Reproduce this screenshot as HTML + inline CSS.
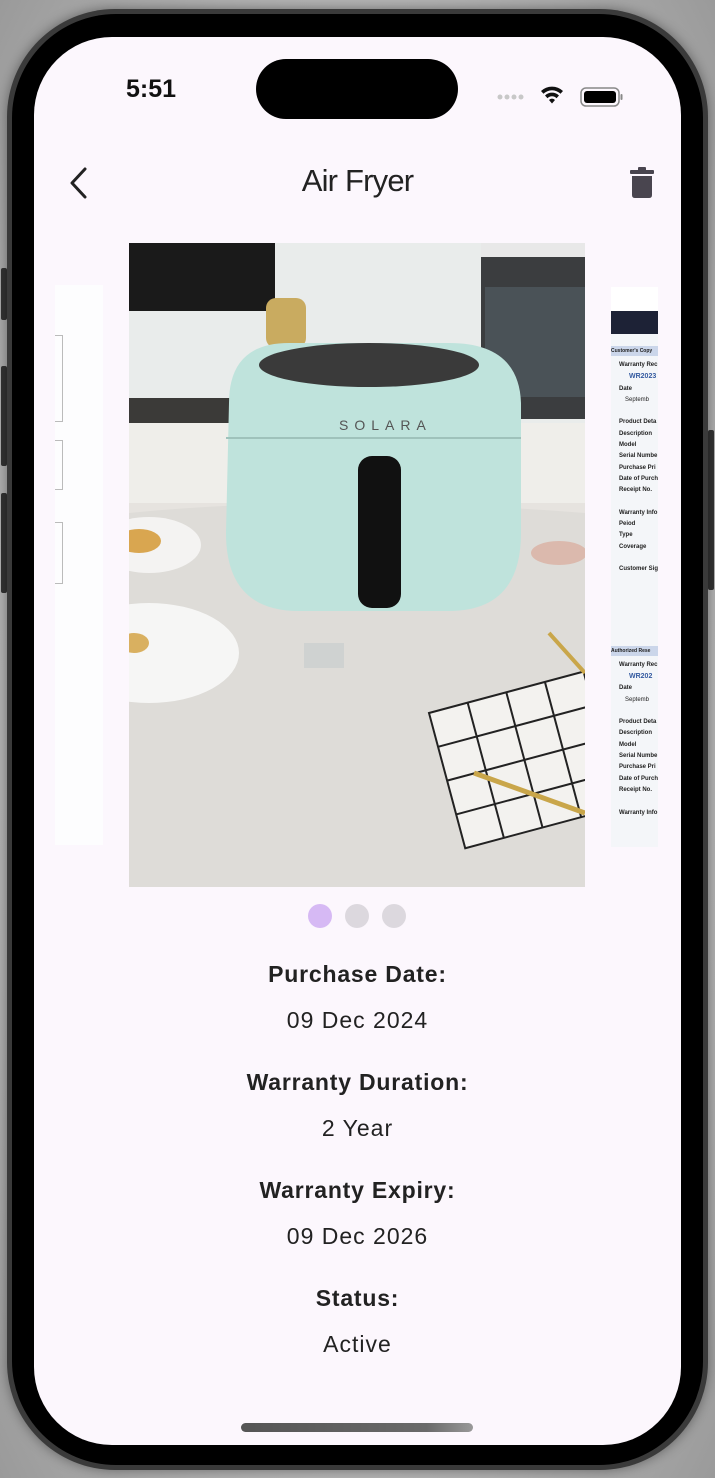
<!DOCTYPE html>
<html><head><meta charset="utf-8"><style>
*{margin:0;padding:0;box-sizing:border-box}
html,body{width:715px;height:1478px;overflow:hidden}
body{background:radial-gradient(ellipse at 50% 50%,#d8d8d8 0%,#bdbdbd 60%,#9a9a9a 100%);font-family:"Liberation Sans",sans-serif;position:relative}
.frame{position:absolute;left:7px;top:9px;width:701px;height:1461px;border-radius:108px;background:#3a3a3a;box-shadow:0 0 12px rgba(0,0,0,.4)}
.frame2{position:absolute;left:12px;top:14px;width:691px;height:1451px;border-radius:104px;background:#000}
.btn{position:absolute;background:#333;width:6px;border-radius:2px}
.screen{position:absolute;left:34px;top:37px;width:647px;height:1408px;border-radius:78px;background:#fcf7fd;overflow:hidden}
.island{position:absolute;left:222px;top:22px;width:202px;height:60px;border-radius:30px;background:#000}
.time{position:absolute;left:92px;top:38px;font-size:25px;font-weight:bold;color:#111}
.title{position:absolute;left:0;width:647px;top:126px;text-align:center;font-size:31px;color:#222;letter-spacing:-0.8px}
.lbl{position:absolute;left:0;width:647px;text-align:center;font-size:23px;font-weight:bold;color:#222;letter-spacing:0.8px}
.val{position:absolute;left:0;width:647px;text-align:center;font-size:23px;color:#222;letter-spacing:1px}
.dot{position:absolute;top:867px;width:24px;height:24px;border-radius:12px;background:#dcd8de}
.home{position:absolute;left:207px;top:1386px;width:232px;height:9px;border-radius:5px;background:linear-gradient(90deg,#555,#6a6a6a 80%,#999)}
.doc{position:absolute;left:577px;top:250px;width:47px;height:560px;background:#f4f6f9;overflow:hidden;font-size:6px;font-weight:bold;color:#222;line-height:11.3px}
</style></head><body>
<div class="btn" style="left:1px;top:268px;height:52px"></div>
<div class="btn" style="left:1px;top:366px;height:100px"></div>
<div class="btn" style="left:1px;top:493px;height:100px"></div>
<div class="btn" style="left:708px;top:430px;height:160px"></div>
<div class="frame"></div><div class="frame2"></div>
<div class="screen">
<div class="island"></div>
<div class="time">5:51</div>
<svg style="position:absolute;left:462px;top:48px" width="130" height="24" viewBox="0 0 130 24">
<g fill="#c8c8c8"><circle cx="4" cy="12" r="2.5"/><circle cx="11" cy="12" r="2.5"/><circle cx="18" cy="12" r="2.5"/><circle cx="25" cy="12" r="2.5"/></g>
<path d="M45 6 a16 16 0 0 1 22 0 l-2.5 2.8 a12 12 0 0 0 -17 0z M49 10.5 a10 10 0 0 1 14 0 l-2.5 2.8 a6 6 0 0 0 -9 0z M53 15 a4 4 0 0 1 6 0 l-3 3.5z" fill="#111"/>
<rect x="85" y="3" width="38" height="18" rx="5" fill="none" stroke="#888" stroke-width="1.5"/>
<rect x="88" y="6" width="32" height="12" rx="3" fill="#000"/>
<rect x="124.5" y="9" width="2" height="6" rx="1" fill="#888"/>
</svg>
<svg style="position:absolute;left:32px;top:129px" width="24" height="34"><path d="M19 3 L6 17 L19 31" fill="none" stroke="#222" stroke-width="3" stroke-linecap="round" stroke-linejoin="round"/></svg>
<div class="title">Air Fryer</div>
<svg style="position:absolute;left:596px;top:130px" width="24" height="32"><rect x="0" y="3" width="24" height="4" rx="1" fill="#49454f"/><rect x="8" y="0" width="8" height="4" rx="1" fill="#49454f"/><path d="M2 9 H22 V28 Q22 31 19 31 H5 Q2 31 2 28Z" fill="#49454f"/></svg>

<div style="position:absolute;left:21px;top:248px;width:48px;height:560px;background:#fdfdfe"><div style="position:absolute;left:0;top:50px;width:8px;height:87px;border:1px solid #bbb;border-left:none"></div><div style="position:absolute;left:0;top:155px;width:8px;height:50px;border:1px solid #bbb;border-left:none"></div><div style="position:absolute;left:0;top:237px;width:8px;height:62px;border:1px solid #bbb;border-left:none"></div></div>

<div class="doc">
<div style="height:24px;background:#fff"></div>
<div style="height:23px;background:#1d2236"></div>
<div style="height:12px"></div>
<div style="background:#cbd6ea;height:10px;font-size:5px;line-height:10px">Customer's Copy</div>
<div style="padding:4px 0 0 8px">Warranty Rec<br><span style="color:#345aa0;font-size:7px;padding-left:10px">WR2023</span><br>Date<br><span style="font-weight:normal;padding-left:6px">Septemb</span><br><br>Product Deta<br>Description<br>Model<br>Serial Numbe<br>Purchase Pri<br>Date of Purch<br>Receipt No.<br><br>Warranty Info<br>Peiod<br>Type<br>Coverage<br><br>Customer Sig</div>
<div style="height:70px"></div>
<div style="background:#cbd6ea;height:10px;font-size:5px;line-height:10px">Authorized Rese</div>
<div style="padding:4px 0 0 8px">Warranty Rec<br><span style="color:#345aa0;font-size:7px;padding-left:10px">WR202</span><br>Date<br><span style="font-weight:normal;padding-left:6px">Septemb</span><br><br>Product Deta<br>Description<br>Model<br>Serial Numbe<br>Purchase Pri<br>Date of Purch<br>Receipt No.<br><br>Warranty Info</div>
</div>

<svg style="position:absolute;left:95px;top:206px" width="456" height="644" viewBox="0 0 456 644">
<rect width="456" height="644" fill="#e4e3df"/>
<rect width="456" height="180" fill="#e9eceb"/>
<rect x="0" y="0" width="146" height="68" fill="#1a1a1a"/>
<rect x="0" y="155" width="120" height="25" fill="#3b3a38"/>
<rect x="352" y="0" width="104" height="14" fill="#e8e8e8"/>
<rect x="352" y="14" width="104" height="162" fill="#3b3d3f"/>
<rect x="356" y="44" width="100" height="110" fill="#4a5257"/>
<rect x="0" y="180" width="456" height="80" fill="#efeeea"/>
<rect x="0" y="260" width="456" height="384" fill="#e6e3df"/>
<path d="M0 270 Q200 250 456 270 L456 644 L0 644Z" fill="#dedcd8"/>
<rect x="137" y="55" width="40" height="50" rx="10" fill="#c9ab60"/>
<ellipse cx="20" cy="302" rx="52" ry="28" fill="#f4f3f2"/>
<ellipse cx="10" cy="298" rx="22" ry="12" fill="#d9a650"/>
<ellipse cx="20" cy="410" rx="90" ry="50" fill="#f6f6f5"/>
<ellipse cx="5" cy="400" rx="15" ry="10" fill="#d9b060"/>
<ellipse cx="430" cy="310" rx="28" ry="12" fill="#dbb9ad"/>
<path d="M100 160 Q100 100 160 100 L320 100 Q390 100 392 160 L392 290 Q392 368 320 368 L170 368 Q97 368 97 290Z" fill="#bfe3dc"/>
<path d="M97 195 H392" stroke="#9fc2bb" stroke-width="2"/>
<ellipse cx="240" cy="122" rx="110" ry="22" fill="#3a3a3a"/>
<rect x="229" y="213" width="43" height="152" rx="14" fill="#111"/>
<text x="210" y="187" font-size="14" fill="#555" font-family="Liberation Sans" letter-spacing="6">SOLARA</text>
<rect x="175" y="400" width="40" height="25" fill="#cfd2d1"/>
<g transform="translate(300,470) rotate(-15)" stroke="#222" stroke-width="2" fill="#f3f2ef"><rect x="0" y="0" width="200" height="140"/><path d="M40 0V140M80 0V140M120 0V140M160 0V140M0 35H200M0 70H200M0 105H200" fill="none"/></g>
<path d="M345 530 L456 570" stroke="#c9a64a" stroke-width="5"/>
<path d="M420 390 L456 430" stroke="#c9a64a" stroke-width="4"/>
</svg>

<div class="dot" style="left:274px;background:#d6b9f4"></div>
<div class="dot" style="left:311px"></div>
<div class="dot" style="left:348px"></div>

<div class="lbl" style="top:924px">Purchase Date:</div>
<div class="val" style="top:970px">09 Dec 2024</div>
<div class="lbl" style="top:1032px">Warranty Duration:</div>
<div class="val" style="top:1078px">2 Year</div>
<div class="lbl" style="top:1140px">Warranty Expiry:</div>
<div class="val" style="top:1186px">09 Dec 2026</div>
<div class="lbl" style="top:1248px">Status:</div>
<div class="val" style="top:1294px">Active</div>
<div class="home"></div>
</div>
</body></html>
